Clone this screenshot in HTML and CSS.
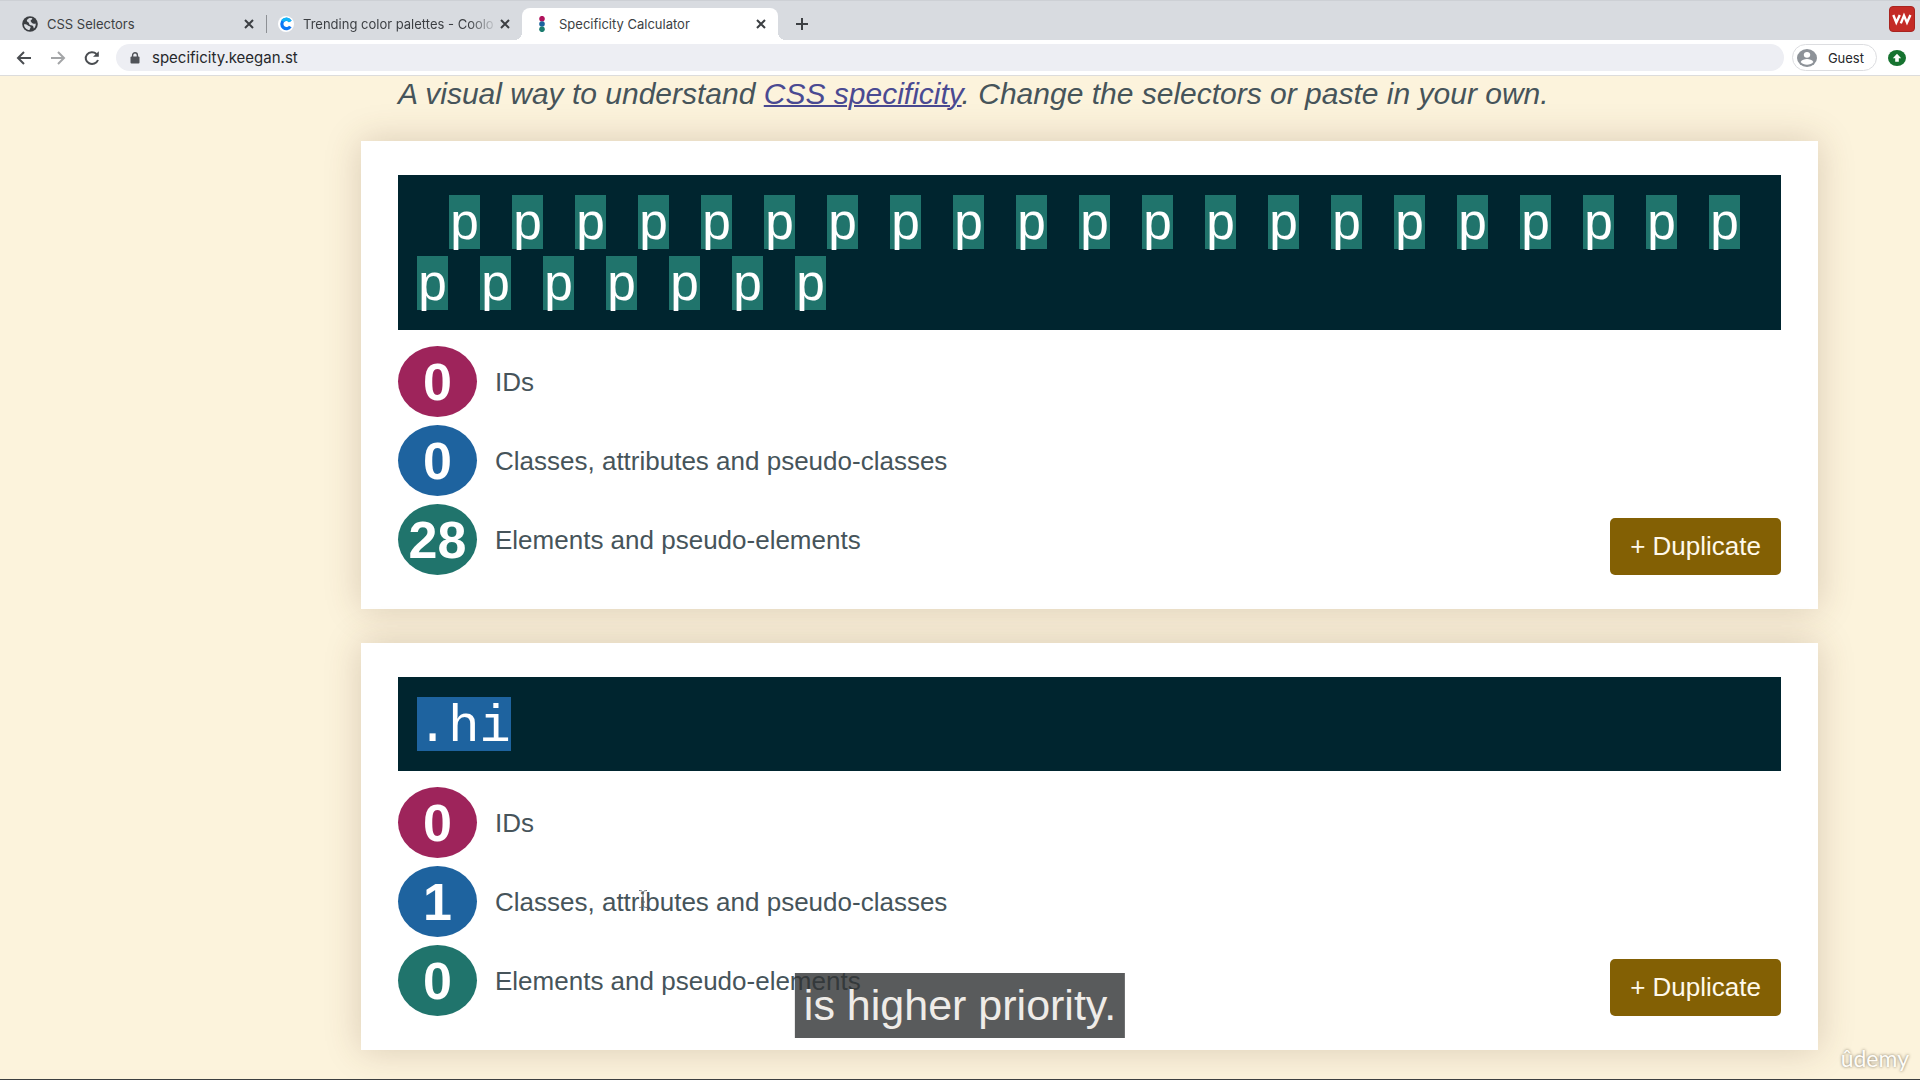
FILE: index.html
```html
<!DOCTYPE html>
<html lang="en">
<head>
<meta charset="utf-8">
<title>Specificity Calculator</title>
<link rel="stylesheet" href="styles.css">
</head>
<body>
<header class="browser">
  <div class="tabstrip">
    <div class="tab">
      <svg class="favicon" viewBox="0 0 16 16"><circle cx="8" cy="8" r="7.8" fill="#3b3e42"/><path d="M2 8.2c1.400-.2 3 .2 4 1.400.8 1 2.400.2 2.600 1.600.1 1.200-1 1.400-1 2.800C4.500 13.800 2 11.500 2 8.200zM7 2.200c1-.3 2.600-.2 3.400.2-.2 1.400-1.600 1.200-1.800 2.400-.2 1 1.200 1 1.200 2.200 1.400.2 1.600 1.400 3.900.6C13.900 10 13 11.600 11.800 12.600c-.4-1.400-.2-2.600-1.600-3-1.600-.4-3.200-.6-3.200-2.400 0-1.400-2.200-1-2.200-2.400C5 3.600 6 2.600 7 2.200z" fill="#d8dbe0"/></svg>
      <button class="tab-title">CSS Selectors</button>
      <button class="tab-close" aria-label="Close tab"><svg viewBox="0 0 10 10"><path d="M1 1l8 8M9 1l-8 8"/></svg></button>
    </div>
    <div class="tab tab-divided">
      <svg class="favicon" viewBox="0 0 16 16"><circle cx="8" cy="8" r="8" fill="#fff"/><path d="M12.300 10.500A4.600 4.600 0 1 1 12.300 5.500" fill="none" stroke="#0b76f5" stroke-width="3.200"/><path d="M4.500 5A4.600 4.600 0 0 1 12.300 5.500" fill="none" stroke="#12b5f7" stroke-width="3.200"/></svg>
      <button class="tab-title tab-title-faded">Trending color palettes - Coolo</button>
      <button class="tab-close" aria-label="Close tab"><svg viewBox="0 0 10 10"><path d="M1 1l8 8M9 1l-8 8"/></svg></button>
    </div>
    <div class="tab tab-active">
      <svg class="favicon" viewBox="0 0 16 16"><circle cx="8" cy="2.700" r="2.800" fill="#b0125b"/><circle cx="8" cy="8" r="2.800" fill="#1c639e"/><circle cx="8" cy="13.300" r="2.800" fill="#1b7c6f"/></svg>
      <button class="tab-title">Specificity Calculator</button>
      <button class="tab-close" aria-label="Close tab"><svg viewBox="0 0 10 10"><path d="M1 1l8 8M9 1l-8 8"/></svg></button>
    </div>
    <button class="new-tab" aria-label="New tab"><svg viewBox="0 0 14 14"><path d="M7 1v12M1 7h12"/></svg></button>
    <svg class="recorder" viewBox="0 0 26 26"><rect x=".5" y=".5" width="25" height="25" rx="3.500" fill="#c42b26" stroke="#a82420"/><path d="M4.300 9l3 7.500L10.800 9M11.800 17.400L15 9.600l3 7L21.400 9" fill="none" stroke="#fff" stroke-width="2.400"/></svg>
  </div>
  <div class="toolbar">
    <nav class="nav-buttons">
      <button aria-label="Back"><svg viewBox="0 0 16 16"><path d="M15 8H2M8 2L2 8l6 6"/></svg></button>
      <button class="nav-off" aria-label="Forward"><svg viewBox="0 0 16 16"><path d="M1 8h13M8 2l6 6-6 6"/></svg></button>
      <button aria-label="Reload"><svg viewBox="0 0 16 16"><path d="M14 10A6.300 5.800 0 1 1 12.500 4"/><path d="M14.800 1.200v5.600H9z"/></svg></button>
    </nav>
    <label class="address">
      <svg viewBox="0 0 10 12"><path d="M2.600 5V3.200a2.400 2.400 0 0 1 4.800 0V5" fill="none" stroke="#505358" stroke-width="1.400"/><rect x=".5" y="4.500" width="9" height="7" rx="1" fill="#505358"/></svg>
      <input type="text" value="specificity.keegan.st" aria-label="Address">
    </label>
    <button class="profile"><svg viewBox="0 0 20 18"><ellipse cx="10" cy="9" rx="10" ry="9" fill="#8d9298"/><ellipse cx="10" cy="5.800" rx="3.200" ry="2.900" fill="#fff"/><path d="M3.600 13c1.200-2 4-2.900 6.400-2.900s5.200.9 6.400 2.900c-1.500 1.800-3.900 2.700-6.400 2.700S5.100 14.800 3.600 13z" fill="#fff"/></svg>Guest</button>
    <button class="update" aria-label="Update"><svg viewBox="0 0 18 16"><ellipse cx="9" cy="8" rx="9" ry="8" fill="#167330"/><path d="M9 3.800L4.800 8.200h2.400v3.600h3.600V8.200h2.400z" fill="#fff"/></svg></button>
  </div>
</header>
<main class="page">
  <p class="intro">A visual way to understand <a href="#specificity">CSS specificity</a>. Change the selectors or paste in your own.</p>
  <section class="card">
    <div class="selector selector-indented" role="textbox" aria-label="Selector" contenteditable="true" spellcheck="false"><span class="token type-c">p</span><span class="token type-c">p</span><span class="token type-c">p</span><span class="token type-c">p</span><span class="token type-c">p</span><span class="token type-c">p</span><span class="token type-c">p</span><span class="token type-c">p</span><span class="token type-c">p</span><span class="token type-c">p</span><span class="token type-c">p</span><span class="token type-c">p</span><span class="token type-c">p</span><span class="token type-c">p</span><span class="token type-c">p</span><span class="token type-c">p</span><span class="token type-c">p</span><span class="token type-c">p</span><span class="token type-c">p</span><span class="token type-c">p</span><span class="token type-c">p</span><span class="token type-c">p</span><span class="token type-c">p</span><span class="token type-c">p</span><span class="token type-c">p</span><span class="token type-c">p</span><span class="token type-c">p</span><span class="token type-c">p</span></div>
    <div class="result">
      <ul class="counts">
        <li><strong class="count type-a">0</strong><span class="label">IDs</span></li>
        <li><strong class="count type-b">0</strong><span class="label">Classes, attributes and pseudo-classes</span></li>
        <li><strong class="count type-c">28</strong><span class="label">Elements and pseudo-elements</span></li>
      </ul>
      <button class="duplicate">+ Duplicate</button>
    </div>
  </section>
  <section class="card">
    <div class="selector" role="textbox" aria-label="Selector" contenteditable="true" spellcheck="false"><span class="token type-b">.hi</span></div>
    <div class="result">
      <ul class="counts">
        <li><strong class="count type-a">0</strong><span class="label">IDs</span></li>
        <li><strong class="count type-b">1</strong><span class="label">Classes, attributes and pseudo-classes</span></li>
        <li><strong class="count type-c">0</strong><span class="label">Elements and pseudo-elements</span></li>
      </ul>
      <button class="duplicate">+ Duplicate</button>
    </div>
  </section>
</main>
<svg class="pointer" viewBox="0 0 12 20"><path d="M2 1.500c2 0 4 .5 4 2.500 0-2 2-2.500 4-2.500M6 4v12M2 18.500c2 0 4-.5 4-2.500 0 2 2 2.500 4 2.500M4 13h4"/></svg>
<div class="caption">is higher priority.</div>
<div class="watermark">ûdemy</div>
</body>
</html>
```
FILE: styles.css
```css
* {
  box-sizing: border-box;
}

body {
  margin: 0;
  height: 100vh;
  display: flex;
  flex-direction: column;
  overflow: hidden;
  position: relative;
  background: #fcf3dc;
  border-bottom: 1px solid #3c3f40;
  color: #46545a;
  font-family: "Helvetica Neue", Helvetica, "Liberation Sans", Arial, sans-serif;
}

button {
  margin: 0;
  padding: 0;
  border: 0;
  background: none;
  color: inherit;
  font: inherit;
}

/* Browser window */
.browser {
  flex: none;
  color: #3c3f43;
  font-family: Inter, sans-serif;
  font-size: 13px;
}

.browser svg {
  display: block;
  flex: none;
}

.tabstrip {
  display: flex;
  align-items: flex-end;
  height: 40px;
  padding: 0 5px 0 10px;
  background: #d8dbe0;
  border-top: 1px solid #cdd0d5;
}

.tab {
  display: flex;
  align-items: center;
  gap: 9px;
  width: 256px;
  height: 32px;
  padding: 0 12px;
  position: relative;
}

.favicon {
  width: 16px;
  height: 16px;
}

.tab-title {
  flex: 1;
  min-width: 0;
  overflow: hidden;
  text-align: left;
  white-space: nowrap;
}

.tab-title-faded {
  margin-right: -7px;
  mask-image: linear-gradient(to right, #000 85%, transparent);
}

.tab-close svg {
  width: 10px;
  height: 10px;
}

.tab-close path,
.new-tab path {
  stroke: #3c3f43;
  stroke-width: 2;
}

.tab-divided::before {
  content: "";
  position: absolute;
  left: 0;
  width: 1px;
  height: 18px;
  background: #8d9095;
}

.tab-active {
  background: #fff;
  border-radius: 8px 8px 0 0;
}

.tab-active::before,
.tab-active::after {
  content: "";
  position: absolute;
  bottom: 0;
  width: 8px;
  height: 8px;
}

.tab-active::before {
  right: 100%;
  background: radial-gradient(circle at top left, transparent 8px, #fff 8px);
}

.tab-active::after {
  left: 100%;
  background: radial-gradient(circle at top right, transparent 8px, #fff 8px);
}

.new-tab {
  height: 32px;
  padding: 0 17px;
}

.new-tab svg {
  width: 14px;
  height: 14px;
}

.recorder {
  width: 26px;
  height: 26px;
  margin: 0 0 8px auto;
}

.toolbar {
  display: flex;
  align-items: center;
  gap: 8px;
  height: 36px;
  padding: 0 14px 0 16px;
  background: #fff;
  border-bottom: 1px solid #dcdcdc;
}

.nav-buttons {
  display: flex;
  gap: 18px;
  margin-right: 8px;
}

.nav-buttons svg {
  width: 16px;
  height: 16px;
}

.nav-buttons path {
  fill: none;
  stroke: #4a4d51;
  stroke-width: 2;
}

.nav-buttons path + path {
  fill: #4a4d51;
  stroke: none;
}

.nav-off {
  opacity: .5;
}

.address {
  flex: 1;
  display: flex;
  align-items: center;
  gap: 12px;
  height: 27px;
  padding: 0 14px;
  border-radius: 14px;
  background: #edeef3;
}

.address svg {
  width: 10px;
  height: 12px;
}

.address input {
  flex: 1;
  padding: 0;
  border: 0;
  background: none;
  color: #26282b;
  font: 15px/18px Inter, sans-serif;
}

.profile {
  display: flex;
  align-items: center;
  gap: 11px;
  height: 27px;
  padding: 0 12px 0 4px;
  border: 1px solid #dcdde0;
  border-radius: 14px;
  color: #26282b;
}

.profile svg {
  width: 20px;
  height: 18px;
}

.update {
  margin-left: 3px;
}

.update svg {
  width: 18px;
  height: 16px;
}

/* Calculator */
.page {
  display: flex;
  flex-direction: column;
  gap: 34px;
  margin: 0 102px 0 361px;
}

.intro {
  margin: 0 37px -5px;
  font-size: 30px;
  font-style: italic;
  line-height: 36px;
}

.intro a {
  color: #4a4a92;
  text-decoration-thickness: 2px;
}

.card {
  display: flex;
  flex-direction: column;
  gap: 16px;
  padding: 34px 37px;
  background: #fff;
  box-shadow: 0 0 34px rgba(96, 60, 40, .22);
}

.selector {
  display: flex;
  flex-wrap: wrap;
  gap: 7px 32px;
  padding: 20px 19px;
  background: #00252f;
  color: #fff;
  font-family: "Courier New", "Liberation Mono", monospace;
  font-size: 52px;
  line-height: 46px;
}

.selector-indented::before {
  content: "";
}

.token {
  padding-top: 8px;
}

.selector-indented .token {
  width: 31px;
}

.type-a {
  background: #9e245b;
}

.type-b {
  background: #1e639f;
}

.type-c {
  background: #20746c;
}

.result {
  display: flex;
  align-items: flex-end;
  justify-content: space-between;
}

.counts {
  display: flex;
  flex-direction: column;
  gap: 8px;
  margin: 0;
  padding: 0;
  list-style: none;
  font-size: 26px;
}

.counts li {
  display: flex;
  align-items: center;
  gap: 18px;
}

.count {
  width: 79px;
  padding-top: 2px;
  border-radius: 50%;
  color: #fff;
  font-size: 52px;
  line-height: 69px;
  text-align: center;
}

.label {
  padding-top: 2px;
}

.duplicate {
  padding: 0 20px;
  border-radius: 5px;
  background: #836004;
  color: #fff9ea;
  font-size: 26px;
  line-height: 57px;
}

/* Video overlay */
.pointer {
  position: absolute;
  left: 637px;
  top: 889px;
  width: 12px;
  height: 20px;
  fill: none;
  stroke: #5c666b;
  stroke-width: 1;
}

.caption {
  position: absolute;
  bottom: 41px;
  left: 50%;
  transform: translateX(-50%);
  padding: 0 9px;
  background: rgba(48, 50, 51, .8);
  color: #efece8;
  font-size: 43px;
  line-height: 65px;
  white-space: nowrap;
}

.watermark {
  position: absolute;
  right: 11px;
  bottom: 6px;
  color: #fffdf8;
  font-family: Lato, sans-serif;
  font-size: 23px;
  line-height: 30px;
  text-shadow: 0 0 3px rgba(60, 50, 30, .7);
}
```
